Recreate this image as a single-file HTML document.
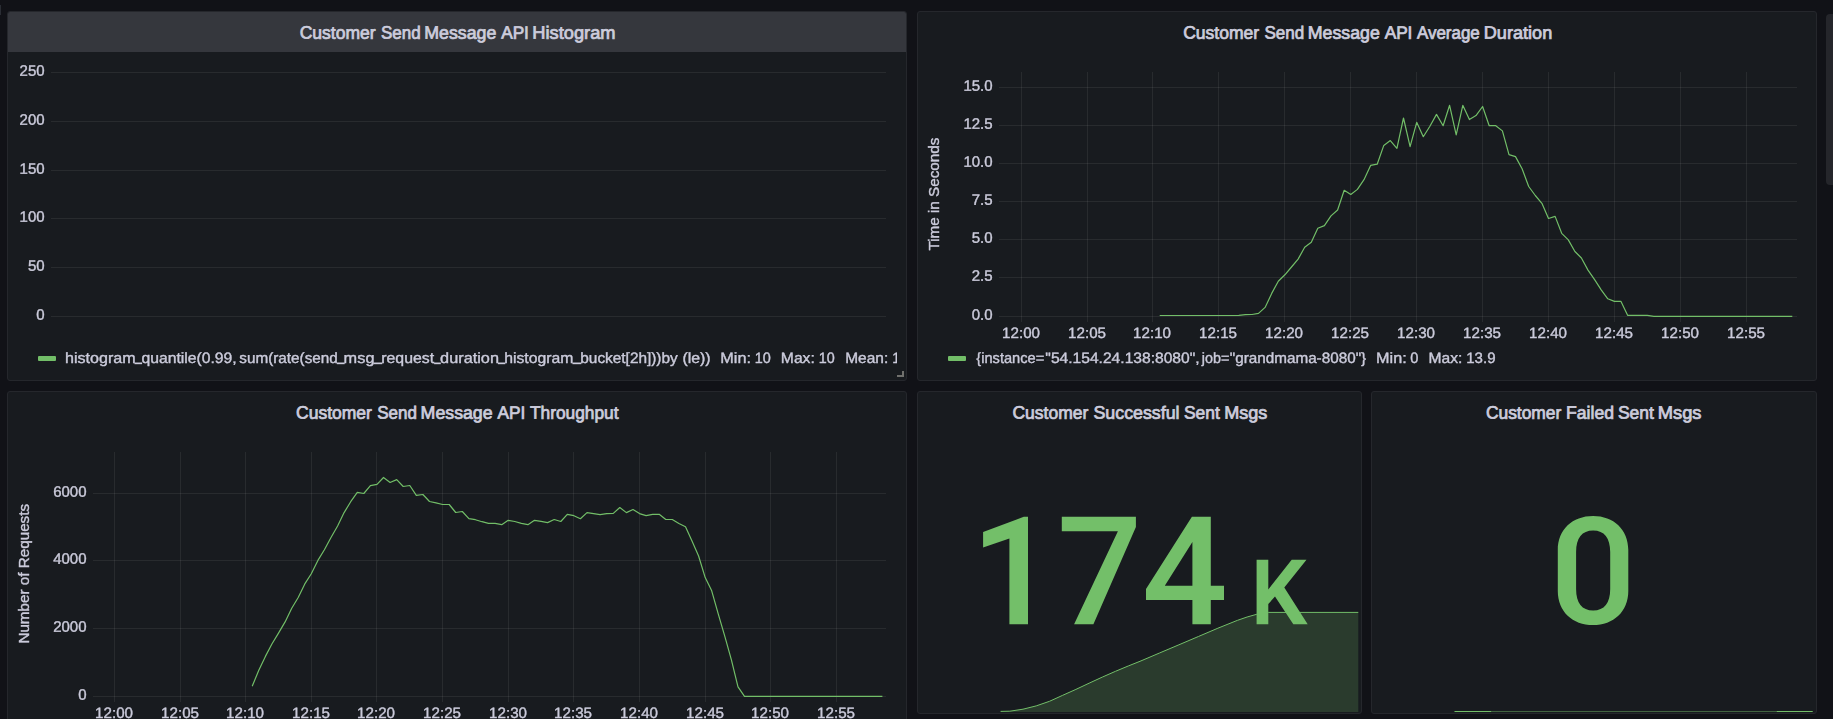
<!DOCTYPE html>
<html><head><meta charset="utf-8"><title>Dashboard</title>
<style>
html,body{margin:0;padding:0;background:#111217;overflow:hidden}
body{width:1833px;height:719px;position:relative;font-family:"Liberation Sans",sans-serif}
svg{position:absolute;left:0;top:0;display:block}
text{font-family:"Liberation Sans",sans-serif;fill:#ccccdc}
.t{stroke:#ccccdc;stroke-width:0.75px;paint-order:stroke}
.g{opacity:0.999}
.g text{stroke:#ccccdc;stroke-width:0.4px;paint-order:stroke}
</style></head><body>
<svg width="1833" height="719" viewBox="0 0 1833 719">
<rect x="0" y="5" width="1" height="10" fill="#2a2d34"/>
<rect x="1826" y="14" width="12" height="171" rx="4" ry="4" fill="#25262b"/>
<rect x="7.5" y="11.5" width="899" height="369" rx="2.5" ry="2.5" fill="#181b1f" stroke="#25272c" stroke-width="1"/>
<rect x="917.5" y="11.5" width="899" height="369" rx="2.5" ry="2.5" fill="#181b1f" stroke="#25272c" stroke-width="1"/>
<rect x="7.5" y="391.5" width="899" height="339" rx="2.5" ry="2.5" fill="#181b1f" stroke="#25272c" stroke-width="1"/>
<rect x="917.5" y="391.5" width="444" height="322" rx="2.5" ry="2.5" fill="#181b1f" stroke="#25272c" stroke-width="1"/>
<rect x="1371.5" y="391.5" width="445" height="322" rx="2.5" ry="2.5" fill="#181b1f" stroke="#25272c" stroke-width="1"/>
<path d="M8,52 V14 a2,2 0 0 1 2,-2 H904 a2,2 0 0 1 2,2 V52 Z" fill="#35373d"/>
<text transform="translate(299.69,38.62) rotate(0.03)" font-size="17.8" textLength="75.93" lengthAdjust="spacingAndGlyphs" class="t">Customer</text>
<text transform="translate(380.9,38.62) rotate(0.03)" font-size="17.8" textLength="39.72" lengthAdjust="spacingAndGlyphs" class="t">Send</text>
<text transform="translate(424.32,38.62) rotate(0.03)" font-size="17.8" textLength="71.99" lengthAdjust="spacingAndGlyphs" class="t">Message</text>
<text transform="translate(501.14,38.62) rotate(0.03)" font-size="17.8" textLength="27.77" lengthAdjust="spacingAndGlyphs" class="t">API</text>
<text transform="translate(532.28,38.62) rotate(0.03)" font-size="17.8" textLength="83.25" lengthAdjust="spacingAndGlyphs" class="t">Histogram</text>
<text transform="translate(1183.19,38.62) rotate(0.03)" font-size="17.8" textLength="75.93" lengthAdjust="spacingAndGlyphs" class="t">Customer</text>
<text transform="translate(1264.4,38.62) rotate(0.03)" font-size="17.8" textLength="39.72" lengthAdjust="spacingAndGlyphs" class="t">Send</text>
<text transform="translate(1307.82,38.62) rotate(0.03)" font-size="17.8" textLength="71.99" lengthAdjust="spacingAndGlyphs" class="t">Message</text>
<text transform="translate(1384.64,38.62) rotate(0.03)" font-size="17.8" textLength="27.77" lengthAdjust="spacingAndGlyphs" class="t">API</text>
<text transform="translate(1416.94,38.62) rotate(0.03)" font-size="17.8" textLength="62.83" lengthAdjust="spacingAndGlyphs" class="t">Average</text>
<text transform="translate(1483.79,38.62) rotate(0.03)" font-size="17.8" textLength="68.41" lengthAdjust="spacingAndGlyphs" class="t">Duration</text>
<text transform="translate(295.99,418.62) rotate(0.03)" font-size="17.8" textLength="75.93" lengthAdjust="spacingAndGlyphs" class="t">Customer</text>
<text transform="translate(377.2,418.62) rotate(0.03)" font-size="17.8" textLength="39.72" lengthAdjust="spacingAndGlyphs" class="t">Send</text>
<text transform="translate(420.62,418.62) rotate(0.03)" font-size="17.8" textLength="71.99" lengthAdjust="spacingAndGlyphs" class="t">Message</text>
<text transform="translate(497.44,418.62) rotate(0.03)" font-size="17.8" textLength="27.77" lengthAdjust="spacingAndGlyphs" class="t">API</text>
<text transform="translate(529.99,418.62) rotate(0.03)" font-size="17.8" textLength="88.57" lengthAdjust="spacingAndGlyphs" class="t">Throughput</text>
<text transform="translate(1012.49,418.62) rotate(0.03)" font-size="17.8" textLength="75.73" lengthAdjust="spacingAndGlyphs" class="t">Customer</text>
<text transform="translate(1093.47,418.62) rotate(0.03)" font-size="17.8" textLength="86.05" lengthAdjust="spacingAndGlyphs" class="t">Successful</text>
<text transform="translate(1183.99,418.62) rotate(0.03)" font-size="17.8" textLength="35.77" lengthAdjust="spacingAndGlyphs" class="t">Sent</text>
<text transform="translate(1224.2,418.62) rotate(0.03)" font-size="17.8" textLength="43.08" lengthAdjust="spacingAndGlyphs" class="t">Msgs</text>
<text transform="translate(1485.89,418.62) rotate(0.03)" font-size="17.8" textLength="75.42" lengthAdjust="spacingAndGlyphs" class="t">Customer</text>
<text transform="translate(1566.03,418.62) rotate(0.03)" font-size="17.8" textLength="47.93" lengthAdjust="spacingAndGlyphs" class="t">Failed</text>
<text transform="translate(1617.88,418.62) rotate(0.03)" font-size="17.8" textLength="35.97" lengthAdjust="spacingAndGlyphs" class="t">Sent</text>
<text transform="translate(1657.77,418.62) rotate(0.03)" font-size="17.8" textLength="43.71" lengthAdjust="spacingAndGlyphs" class="t">Msgs</text>
<g class="g">
<rect x="51" y="72" width="835" height="1" fill="rgba(200,200,200,0.1)"/>
<text transform="translate(44.6,75.8) rotate(0.03)" font-size="15" text-anchor="end">250</text>
<rect x="51" y="121" width="835" height="1" fill="rgba(200,200,200,0.1)"/>
<text transform="translate(44.6,124.8) rotate(0.03)" font-size="15" text-anchor="end">200</text>
<rect x="51" y="170" width="835" height="1" fill="rgba(200,200,200,0.1)"/>
<text transform="translate(44.6,173.8) rotate(0.03)" font-size="15" text-anchor="end">150</text>
<rect x="51" y="218" width="835" height="1" fill="rgba(200,200,200,0.1)"/>
<text transform="translate(44.6,221.8) rotate(0.03)" font-size="15" text-anchor="end">100</text>
<rect x="51" y="267" width="835" height="1" fill="rgba(200,200,200,0.1)"/>
<text transform="translate(44.6,270.8) rotate(0.03)" font-size="15" text-anchor="end">50</text>
<rect x="51" y="316" width="835" height="1" fill="rgba(200,200,200,0.1)"/>
<text transform="translate(44.6,319.8) rotate(0.03)" font-size="15" text-anchor="end">0</text>
<rect x="38" y="356" width="18" height="5" rx="1" fill="#73bf69"/>
<clipPath id="c1"><rect x="8" y="340" width="889" height="40"/></clipPath>
<g clip-path="url(#c1)">
<text transform="translate(64.99,363) rotate(0.03)" font-size="15" textLength="70.57" lengthAdjust="spacingAndGlyphs">histogram</text>
<rect x="134.5" y="362.5" width="7.6" height="1.7" fill="#ccccdc"/>
<text transform="translate(141.44,363) rotate(0.03)" font-size="15" textLength="95.27" lengthAdjust="spacingAndGlyphs">quantile(0.99,</text>
<text transform="translate(239.27,363) rotate(0.03)" font-size="15" textLength="98.51" lengthAdjust="spacingAndGlyphs">sum(rate(send</text>
<rect x="336.8" y="362.5" width="7.9" height="1.7" fill="#ccccdc"/>
<text transform="translate(343.62,363) rotate(0.03)" font-size="15" textLength="30.84" lengthAdjust="spacingAndGlyphs">msg</text>
<rect x="373.4" y="362.5" width="8.9" height="1.7" fill="#ccccdc"/>
<text transform="translate(381.25,363) rotate(0.03)" font-size="15" textLength="52.97" lengthAdjust="spacingAndGlyphs">request</text>
<rect x="434.1" y="362.5" width="6.7" height="1.7" fill="#ccccdc"/>
<text transform="translate(440.12,363) rotate(0.03)" font-size="15" textLength="58.84" lengthAdjust="spacingAndGlyphs">duration</text>
<rect x="497.9" y="362.5" width="7.4" height="1.7" fill="#ccccdc"/>
<text transform="translate(504.21,363) rotate(0.03)" font-size="15" textLength="69.23" lengthAdjust="spacingAndGlyphs">histogram</text>
<rect x="572.4" y="362.5" width="8.9" height="1.7" fill="#ccccdc"/>
<text transform="translate(580.31,363) rotate(0.03)" font-size="15" textLength="97.42" lengthAdjust="spacingAndGlyphs">bucket[2h]))by</text>
<text transform="translate(682.41,363) rotate(0.03)" font-size="15" textLength="28.27" lengthAdjust="spacingAndGlyphs">(le))</text>
<text transform="translate(720.27,363) rotate(0.03)" font-size="15" textLength="30.72" lengthAdjust="spacingAndGlyphs">Min:</text>
<text transform="translate(754.8,363) rotate(0.03)" font-size="15" textLength="16.06" lengthAdjust="spacingAndGlyphs">10</text>
<text transform="translate(780.81,363) rotate(0.03)" font-size="15" textLength="34.02" lengthAdjust="spacingAndGlyphs">Max:</text>
<text transform="translate(818.71,363) rotate(0.03)" font-size="15" textLength="15.95" lengthAdjust="spacingAndGlyphs">10</text>
<text transform="translate(845.23,363) rotate(0.03)" font-size="15" textLength="42.98" lengthAdjust="spacingAndGlyphs">Mean:</text>
<text transform="translate(892.31,363) rotate(0.03)" font-size="15" textLength="15.95" lengthAdjust="spacingAndGlyphs">10</text>
</g>
<path d="M897,375 H902 V371 H904 V377 H897 Z" fill="#71716e"/>
<rect x="999" y="87" width="798" height="1" fill="rgba(200,200,200,0.1)"/>
<text transform="translate(992.6,90.8) rotate(0.03)" font-size="15" text-anchor="end">15.0</text>
<rect x="999" y="125" width="798" height="1" fill="rgba(200,200,200,0.1)"/>
<text transform="translate(992.6,128.8) rotate(0.03)" font-size="15" text-anchor="end">12.5</text>
<rect x="999" y="163" width="798" height="1" fill="rgba(200,200,200,0.1)"/>
<text transform="translate(992.6,166.8) rotate(0.03)" font-size="15" text-anchor="end">10.0</text>
<rect x="999" y="201" width="798" height="1" fill="rgba(200,200,200,0.1)"/>
<text transform="translate(992.6,204.8) rotate(0.03)" font-size="15" text-anchor="end">7.5</text>
<rect x="999" y="239" width="798" height="1" fill="rgba(200,200,200,0.1)"/>
<text transform="translate(992.6,242.8) rotate(0.03)" font-size="15" text-anchor="end">5.0</text>
<rect x="999" y="277" width="798" height="1" fill="rgba(200,200,200,0.1)"/>
<text transform="translate(992.6,280.8) rotate(0.03)" font-size="15" text-anchor="end">2.5</text>
<rect x="999" y="316" width="798" height="1" fill="rgba(200,200,200,0.1)"/>
<text transform="translate(992.6,319.8) rotate(0.03)" font-size="15" text-anchor="end">0.0</text>
<rect x="1021" y="72" width="1" height="250" fill="rgba(200,200,200,0.1)"/>
<text transform="translate(1021.05,337.9) rotate(0.03)" font-size="15" text-anchor="middle" textLength="37.9" lengthAdjust="spacingAndGlyphs">12:00</text>
<rect x="1087" y="72" width="1" height="250" fill="rgba(200,200,200,0.1)"/>
<text transform="translate(1087.05,337.9) rotate(0.03)" font-size="15" text-anchor="middle" textLength="37.9" lengthAdjust="spacingAndGlyphs">12:05</text>
<rect x="1152" y="72" width="1" height="250" fill="rgba(200,200,200,0.1)"/>
<text transform="translate(1152.05,337.9) rotate(0.03)" font-size="15" text-anchor="middle" textLength="37.9" lengthAdjust="spacingAndGlyphs">12:10</text>
<rect x="1218" y="72" width="1" height="250" fill="rgba(200,200,200,0.1)"/>
<text transform="translate(1218.05,337.9) rotate(0.03)" font-size="15" text-anchor="middle" textLength="37.9" lengthAdjust="spacingAndGlyphs">12:15</text>
<rect x="1284" y="72" width="1" height="250" fill="rgba(200,200,200,0.1)"/>
<text transform="translate(1284.05,337.9) rotate(0.03)" font-size="15" text-anchor="middle" textLength="37.9" lengthAdjust="spacingAndGlyphs">12:20</text>
<rect x="1350" y="72" width="1" height="250" fill="rgba(200,200,200,0.1)"/>
<text transform="translate(1350.05,337.9) rotate(0.03)" font-size="15" text-anchor="middle" textLength="37.9" lengthAdjust="spacingAndGlyphs">12:25</text>
<rect x="1416" y="72" width="1" height="250" fill="rgba(200,200,200,0.1)"/>
<text transform="translate(1416.05,337.9) rotate(0.03)" font-size="15" text-anchor="middle" textLength="37.9" lengthAdjust="spacingAndGlyphs">12:30</text>
<rect x="1482" y="72" width="1" height="250" fill="rgba(200,200,200,0.1)"/>
<text transform="translate(1482.05,337.9) rotate(0.03)" font-size="15" text-anchor="middle" textLength="37.9" lengthAdjust="spacingAndGlyphs">12:35</text>
<rect x="1548" y="72" width="1" height="250" fill="rgba(200,200,200,0.1)"/>
<text transform="translate(1548.05,337.9) rotate(0.03)" font-size="15" text-anchor="middle" textLength="37.9" lengthAdjust="spacingAndGlyphs">12:40</text>
<rect x="1614" y="72" width="1" height="250" fill="rgba(200,200,200,0.1)"/>
<text transform="translate(1614.05,337.9) rotate(0.03)" font-size="15" text-anchor="middle" textLength="37.9" lengthAdjust="spacingAndGlyphs">12:45</text>
<rect x="1680" y="72" width="1" height="250" fill="rgba(200,200,200,0.1)"/>
<text transform="translate(1680.05,337.9) rotate(0.03)" font-size="15" text-anchor="middle" textLength="37.9" lengthAdjust="spacingAndGlyphs">12:50</text>
<rect x="1746" y="72" width="1" height="250" fill="rgba(200,200,200,0.1)"/>
<text transform="translate(1746.05,337.9) rotate(0.03)" font-size="15" text-anchor="middle" textLength="37.9" lengthAdjust="spacingAndGlyphs">12:55</text>
<text transform="translate(939,250.6) rotate(-90)" font-size="15" textLength="113" lengthAdjust="spacingAndGlyphs">Time in Seconds</text>
<polyline fill="none" stroke="#73bf69" stroke-width="1.2" stroke-linejoin="round" points="1159.7,315.5 1166.3,315.5 1172.9,315.5 1179.5,315.5 1186.0,315.5 1192.6,315.5 1199.2,315.5 1205.8,315.5 1212.4,315.5 1219.0,315.5 1225.6,315.5 1232.2,315.5 1238.8,315.4 1245.4,314.6 1252.0,314.5 1258.5,313.4 1265.1,307.4 1271.7,293.4 1278.3,281.2 1284.9,274.8 1291.5,267.0 1298.1,259.1 1304.7,247.3 1311.3,242.3 1317.8,228.3 1324.4,225.6 1331.0,215.9 1337.6,210.0 1344.2,190.3 1350.8,194.5 1357.4,189.4 1364.0,179.7 1370.6,165.4 1377.2,164.2 1383.8,145.4 1390.3,140.6 1396.9,148.4 1403.5,118.0 1410.1,146.7 1416.7,122.3 1423.3,136.7 1429.9,126.3 1436.5,114.4 1443.1,125.7 1449.6,105.3 1456.2,134.9 1462.8,105.3 1469.4,119.6 1476.0,115.6 1482.6,106.5 1489.2,125.7 1495.8,125.7 1502.4,130.9 1509.0,154.7 1515.5,156.6 1522.1,168.8 1528.7,186.5 1535.3,195.5 1541.9,203.3 1548.5,218.5 1555.1,216.4 1561.7,233.3 1568.3,239.9 1574.9,251.5 1581.4,258.0 1588.0,270.1 1594.6,279.7 1601.2,289.8 1607.8,298.8 1614.4,301.4 1621.0,301.4 1627.6,315.3 1634.2,315.3 1640.8,315.3 1647.3,315.3 1653.9,316.4 1660.5,316.4 1667.1,316.4 1673.7,316.4 1680.3,316.4 1686.9,316.4 1693.5,316.4 1700.1,316.4 1706.7,316.4 1713.2,316.4 1719.8,316.4 1726.4,316.4 1733.0,316.4 1739.6,316.4 1746.2,316.4 1752.8,316.4 1759.4,316.4 1766.0,316.4 1772.6,316.4 1779.2,316.4 1785.7,316.4 1792.3,316.4"/>
<rect x="948" y="356" width="18" height="5" rx="1" fill="#73bf69"/>
<text transform="translate(976.36,363) rotate(0.03)" font-size="15" textLength="67.86" lengthAdjust="spacingAndGlyphs">{instance=</text>
<text transform="translate(1045.34,363) rotate(0.03)" font-size="15" textLength="154.26" lengthAdjust="spacingAndGlyphs">&quot;54.154.24.138:8080&quot;,</text>
<text transform="translate(1201.85,363) rotate(0.03)" font-size="15" textLength="27.46" lengthAdjust="spacingAndGlyphs">job=</text>
<text transform="translate(1229.75,363) rotate(0.03)" font-size="15" textLength="136.42" lengthAdjust="spacingAndGlyphs">&quot;grandmama-8080&quot;}</text>
<text transform="translate(1376.07,363) rotate(0.03)" font-size="15" textLength="30.61" lengthAdjust="spacingAndGlyphs">Min:</text>
<text transform="translate(1410.33,363) rotate(0.03)" font-size="15" textLength="8.14" lengthAdjust="spacingAndGlyphs">0</text>
<text transform="translate(1428.52,363) rotate(0.03)" font-size="15" textLength="33.8" lengthAdjust="spacingAndGlyphs">Max:</text>
<text transform="translate(1466.25,363) rotate(0.03)" font-size="15" textLength="29.26" lengthAdjust="spacingAndGlyphs">13.9</text>
<rect x="93" y="493" width="793" height="1" fill="rgba(200,200,200,0.1)"/>
<text transform="translate(86.5,496.8) rotate(0.03)" font-size="15" text-anchor="end">6000</text>
<rect x="93" y="560" width="793" height="1" fill="rgba(200,200,200,0.1)"/>
<text transform="translate(86.5,563.8) rotate(0.03)" font-size="15" text-anchor="end">4000</text>
<rect x="93" y="628" width="793" height="1" fill="rgba(200,200,200,0.1)"/>
<text transform="translate(86.5,631.8) rotate(0.03)" font-size="15" text-anchor="end">2000</text>
<rect x="93" y="696" width="793" height="1" fill="rgba(200,200,200,0.1)"/>
<text transform="translate(86.5,699.8) rotate(0.03)" font-size="15" text-anchor="end">0</text>
<rect x="114" y="452" width="1" height="250" fill="rgba(200,200,200,0.1)"/>
<text transform="translate(114.05,717.9) rotate(0.03)" font-size="15" text-anchor="middle" textLength="37.9" lengthAdjust="spacingAndGlyphs">12:00</text>
<rect x="180" y="452" width="1" height="250" fill="rgba(200,200,200,0.1)"/>
<text transform="translate(180.05,717.9) rotate(0.03)" font-size="15" text-anchor="middle" textLength="37.9" lengthAdjust="spacingAndGlyphs">12:05</text>
<rect x="245" y="452" width="1" height="250" fill="rgba(200,200,200,0.1)"/>
<text transform="translate(245.05,717.9) rotate(0.03)" font-size="15" text-anchor="middle" textLength="37.9" lengthAdjust="spacingAndGlyphs">12:10</text>
<rect x="311" y="452" width="1" height="250" fill="rgba(200,200,200,0.1)"/>
<text transform="translate(311.05,717.9) rotate(0.03)" font-size="15" text-anchor="middle" textLength="37.9" lengthAdjust="spacingAndGlyphs">12:15</text>
<rect x="376" y="452" width="1" height="250" fill="rgba(200,200,200,0.1)"/>
<text transform="translate(376.05,717.9) rotate(0.03)" font-size="15" text-anchor="middle" textLength="37.9" lengthAdjust="spacingAndGlyphs">12:20</text>
<rect x="442" y="452" width="1" height="250" fill="rgba(200,200,200,0.1)"/>
<text transform="translate(442.05,717.9) rotate(0.03)" font-size="15" text-anchor="middle" textLength="37.9" lengthAdjust="spacingAndGlyphs">12:25</text>
<rect x="508" y="452" width="1" height="250" fill="rgba(200,200,200,0.1)"/>
<text transform="translate(508.05,717.9) rotate(0.03)" font-size="15" text-anchor="middle" textLength="37.9" lengthAdjust="spacingAndGlyphs">12:30</text>
<rect x="573" y="452" width="1" height="250" fill="rgba(200,200,200,0.1)"/>
<text transform="translate(573.05,717.9) rotate(0.03)" font-size="15" text-anchor="middle" textLength="37.9" lengthAdjust="spacingAndGlyphs">12:35</text>
<rect x="639" y="452" width="1" height="250" fill="rgba(200,200,200,0.1)"/>
<text transform="translate(639.05,717.9) rotate(0.03)" font-size="15" text-anchor="middle" textLength="37.9" lengthAdjust="spacingAndGlyphs">12:40</text>
<rect x="705" y="452" width="1" height="250" fill="rgba(200,200,200,0.1)"/>
<text transform="translate(705.05,717.9) rotate(0.03)" font-size="15" text-anchor="middle" textLength="37.9" lengthAdjust="spacingAndGlyphs">12:45</text>
<rect x="770" y="452" width="1" height="250" fill="rgba(200,200,200,0.1)"/>
<text transform="translate(770.05,717.9) rotate(0.03)" font-size="15" text-anchor="middle" textLength="37.9" lengthAdjust="spacingAndGlyphs">12:50</text>
<rect x="836" y="452" width="1" height="250" fill="rgba(200,200,200,0.1)"/>
<text transform="translate(836.05,717.9) rotate(0.03)" font-size="15" text-anchor="middle" textLength="37.9" lengthAdjust="spacingAndGlyphs">12:55</text>
<text transform="translate(29.1,643.6) rotate(-90)" font-size="15" textLength="139.7" lengthAdjust="spacingAndGlyphs">Number of Requests</text>
<polyline fill="none" stroke="#73bf69" stroke-width="1.2" stroke-linejoin="round" points="252.2,686.3 258.8,670.3 265.4,656.4 271.9,644.0 278.5,633.1 285.1,621.9 291.6,608.5 298.2,597.5 304.8,583.9 311.3,573.8 317.9,560.4 324.4,549.7 331.0,537.5 337.6,526.0 344.1,512.6 350.7,501.7 357.3,492.3 363.8,493.5 370.4,485.7 377.0,484.4 383.5,477.5 390.1,482.5 396.7,479.6 403.2,486.5 409.8,485.5 416.3,495.4 422.9,494.5 429.5,501.5 436.0,502.8 442.6,504.5 449.2,504.5 455.7,512.5 462.3,511.5 468.9,518.6 475.4,519.7 482.0,521.7 488.5,523.4 495.1,523.4 501.7,524.7 508.2,520.3 514.8,521.5 521.4,523.4 527.9,524.7 534.5,520.3 541.1,521.4 547.6,522.6 554.2,519.5 560.8,521.5 567.3,514.3 573.9,515.7 580.4,518.7 587.0,512.6 593.6,513.6 600.1,514.7 606.7,513.6 613.3,513.4 619.8,507.5 626.4,512.6 633.0,509.5 639.5,513.6 646.1,515.6 652.6,514.3 659.2,514.3 665.8,519.5 672.3,519.5 678.9,523.5 685.5,526.7 692.0,541.0 698.6,556.0 705.2,577.6 711.7,590.8 718.3,614.1 724.9,636.6 731.4,659.8 738.0,686.8 744.5,696.4 751.1,696.4 757.7,696.4 764.2,696.4 770.8,696.4 777.4,696.4 783.9,696.4 790.5,696.4 797.1,696.4 803.6,696.4 810.2,696.4 816.7,696.4 823.3,696.4 829.9,696.4 836.4,696.4 843.0,696.4 849.6,696.4 856.1,696.4 862.7,696.4 869.3,696.4 875.8,696.4 882.4,696.4"/>
</g>
<polygon points="1000.6,711.4 1009.8,711.2 1023.0,709.2 1036.2,705.9 1049.5,701.3 1062.7,695.3 1075.9,689.4 1089.1,683.2 1102.3,677.1 1115.5,671.3 1128.7,665.8 1140.0,661.3 1159.5,653.0 1178.9,644.8 1198.4,636.5 1217.9,628.2 1237.3,620.4 1247.1,617.0 1256.3,614.4 1262.5,613.1 1268.5,612.4 1358.3,612.4 1358.3,712.1 1000.6,712.1" fill="#73bf69" fill-opacity="0.2"/>
<polyline fill="none" stroke="#73bf69" stroke-width="1" points="1000.6,711.4 1009.8,711.2 1023.0,709.2 1036.2,705.9 1049.5,701.3 1062.7,695.3 1075.9,689.4 1089.1,683.2 1102.3,677.1 1115.5,671.3 1128.7,665.8 1140.0,661.3 1159.5,653.0 1178.9,644.8 1198.4,636.5 1217.9,628.2 1237.3,620.4 1247.1,617.0 1256.3,614.4 1262.5,613.1 1268.5,612.4 1358.3,612.4"/>
<g fill="#73bf69">
<path d="M1028,516.75 V624.3 H1009.4 V538.5 L983.1,547.5 V532.1 L1023.8,516.75 Z"/>
<path d="M1061.8,516.75 H1135.9 V527.1 L1093.4,624.3 H1074.1 L1117.9,531.2 H1061.8 Z"/>
<path fill-rule="evenodd" d="M1191.9,516.75 H1210.8 V585.8 H1224 V599.9 H1210.8 V624.3 H1192.4 V599.9 H1146 V589 Z M1192.4,542.05 V585.8 H1164.8 Z"/>
<path d="M1256.6,559.8 H1268.3 V589.4 L1291.7,559.8 H1306.5 L1284.3,587.6 L1307.7,624.3 H1293.3 L1275.0,596.6 L1268.3,604.0 V624.3 H1256.6 Z"/>
</g>
<path fill="#73bf69" fill-rule="evenodd" d="M1557.8,550 C1557.8,529.5 1572.5,516 1593.05,516 C1613.6,516 1628.3,529.5 1628.3,550 V591 C1628.3,611.5 1613.6,625.1 1593.05,625.1 C1572.5,625.1 1557.8,611.5 1557.8,591 Z M1576.1,552 V589 C1576.1,603 1582,610.5 1593.15,610.5 C1604.3,610.5 1610.2,603 1610.2,589 V552 C1610.2,538 1604.3,530.6 1593.15,530.6 C1582,530.6 1576.1,538 1576.1,552 Z"/>
<rect x="1454.6" y="711" width="358" height="1" fill="#73bf69" fill-opacity="0.45"/>
<rect x="1454.6" y="711" width="36.5" height="1" fill="#73bf69"/>
<rect x="1776.8" y="711" width="35.8" height="1" fill="#73bf69"/>
</svg>
</body></html>
